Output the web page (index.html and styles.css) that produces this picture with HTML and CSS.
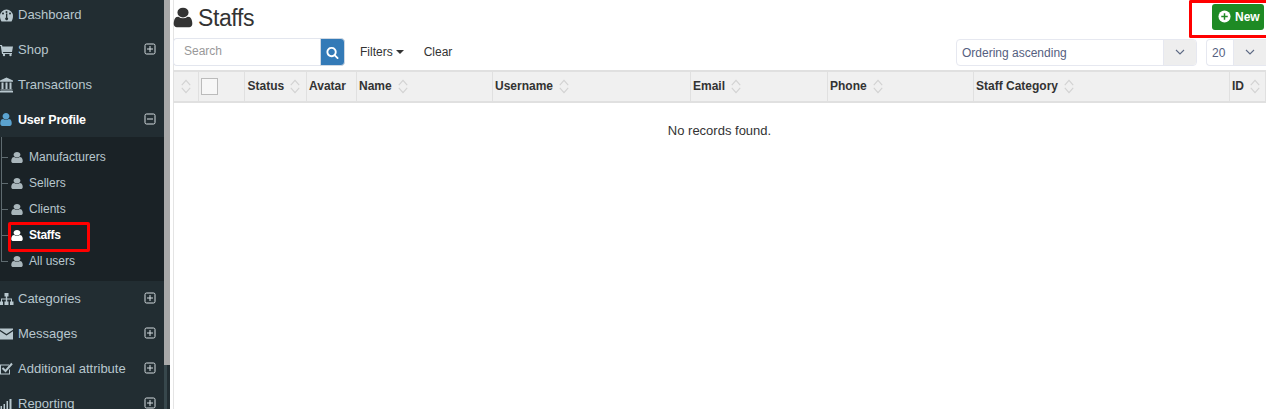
FILE: index.html
```html
<!DOCTYPE html>
<html lang="en">
<head>
<meta charset="UTF-8" />
<meta name="viewport" content="width=device-width, initial-scale=1" />
<title>Staffs</title>
<link rel="stylesheet" href="styles.css">
</head>
<body>
<svg class="defs" width="0" height="0">
  <symbol id="i-user" viewBox="0 0 1792 1792" preserveAspectRatio="none"><path d="M1536 1399q0 109-62.5 187t-150.5 78h-854q-88 0-150.5-78t-62.5-187q0-85 8.5-160.5t31.5-152 58.5-131 94-89 134.5-34.5q131 128 313 128t313-128q76 0 134.5 34.5t94 89 58.5 131 31.5 152 8.5 160.5zm-256-887q0 159-112.5 271.5t-271.5 112.5-271.5-112.5-112.5-271.5 112.5-271.5 271.5-112.5 271.5 112.5 112.5 271.5z"/></symbol>
  <symbol id="i-search" viewBox="0 0 1792 1792"><path d="M1216 832q0-185-131.5-316.5t-316.5-131.5-316.5 131.5-131.5 316.5 131.5 316.5 316.5 131.5 316.5-131.5 131.5-316.5zm512 832q0 52-38 90t-90 38q-54 0-90-38l-343-342q-179 124-399 124-143 0-273.5-55.5t-225-150-150-225-55.5-273.5 55.5-273.5 150-225 225-150 273.5-55.5 273.5 55.5 225 150 150 225 55.5 273.5q0 220-124 399l343 343q37 37 37 90z"/></symbol>
  <symbol id="i-plus" viewBox="0 0 12 12"><rect x="1" y="1" width="10" height="10" rx="1.500" fill="none" stroke="currentColor"/><path d="M3 6h6M6 3v6" stroke="currentColor"/></symbol>
  <symbol id="i-minus" viewBox="0 0 12 12"><rect x="1" y="1" width="10" height="10" rx="1.500" fill="none" stroke="currentColor"/><path d="M3 6h6" stroke="currentColor"/></symbol>
  <symbol id="i-sort" viewBox="0 0 12 16"><path d="M1.500 6.500L6 1.500l4.500 5M1.500 9.500L6 14.500l4.500-5" fill="none" stroke="#d2d2d2" stroke-width="1.200"/></symbol>
  <symbol id="i-chev" viewBox="0 0 10 6"><path d="M1 1l4 4 4-4" fill="none" stroke="#5f6b85" stroke-width="1.100"/></symbol>
</svg>

<div class="app">
  <aside class="sidebar">
    <a class="nav-row">
      <svg class="nav-icon" viewBox="0 0 16 16"><path fill-rule="evenodd" d="M8.500 2.500A6.500 6.500 0 0 0 2 9c0 2 .6 3.900 1.500 5.500h10c.9-1.600 1.500-3.500 1.500-5.500a6.500 6.500 0 0 0-6.500-6.500zM8.500 4a1 1 0 1 1 0 2 1 1 0 0 1 0-2zM5 5.500a1 1 0 1 1 0 2 1 1 0 0 1 0-2zM12 5.500a1 1 0 1 1 0 2 1 1 0 0 1 0-2zM8 6.500h1.400l-.1 4a1.400 1.400 0 1 1-1.300 0z"/></svg>
      <span>Dashboard</span>
    </a>
    <a class="nav-row">
      <svg class="nav-icon" viewBox="0 0 16 16"><path d="M2 3h2l.4 1.500H15l-1 5.500H5l.2 1H14v1H4L2.800 4H2z"/><circle cx="6" cy="13" r="1.200"/><circle cx="12.500" cy="13" r="1.200"/></svg>
      <span>Shop</span>
      <svg class="toggle"><use href="#i-plus"/></svg>
    </a>
    <a class="nav-row">
      <svg class="nav-icon" viewBox="0 0 16 16"><path d="M8.500 .5L15 3.500v1.200H2V3.500zM3.500 5.500h2v6.500h-2zM7.500 5.500h2v6.500h-2zM11.500 5.500h2v6.500h-2zM2.500 12.500h12v1h-12zM2 14h13v1.500H2z"/></svg>
      <span>Transactions</span>
    </a>
    <a class="nav-row is-open">
      <svg class="nav-icon user-blue"><use href="#i-user"/></svg>
      <span>User Profile</span>
      <svg class="toggle"><use href="#i-minus"/></svg>
    </a>
    <ul class="subnav">
      <li><svg class="sub-icon"><use href="#i-user"/></svg>Manufacturers</li>
      <li><svg class="sub-icon"><use href="#i-user"/></svg>Sellers</li>
      <li><svg class="sub-icon"><use href="#i-user"/></svg>Clients</li>
      <li class="active"><svg class="sub-icon"><use href="#i-user"/></svg>Staffs</li>
      <li><svg class="sub-icon"><use href="#i-user"/></svg>All users</li>
    </ul>
    <a class="nav-row">
      <svg class="nav-icon" viewBox="0 0 16 16"><path d="M6.500 2h4v3.500H9.200v2H14v3h1.500V14H12v-3.500h1v-2H9.200v2h1.300V14h-4v-3.500h1.300v-2H4v2h1V14H2v-3.500h1v-3h4.800v-2H6.500z"/></svg>
      <span>Categories</span>
      <svg class="toggle"><use href="#i-plus"/></svg>
    </a>
    <a class="nav-row">
      <svg class="nav-icon" viewBox="0 0 16 16"><path d="M2 2.500h13v1.300L8.500 8 2 3.800zM2 5.300l6.500 4.200L15 5.300v8.200H2z"/></svg>
      <span>Messages</span>
      <svg class="toggle"><use href="#i-plus"/></svg>
    </a>
    <a class="nav-row">
      <svg class="nav-icon" viewBox="0 0 16 16"><path d="M2 3.500h9v1H3v8h8V9l1-1v5.500H2z"/><path d="M4.500 7l3 3L14 2.500" fill="none" stroke="currentColor" stroke-width="2"/></svg>
      <span>Additional attribute</span>
      <svg class="toggle"><use href="#i-plus"/></svg>
    </a>
    <a class="nav-row">
      <svg class="nav-icon" viewBox="0 0 16 16"><path d="M2.500 10h1.500v4H2.500zM5.500 8h1.500v6H5.500zM8.500 5h1.500v9H8.500zM11.500 3h2v11h-2z"/></svg>
      <span>Reporting</span>
      <svg class="toggle"><use href="#i-plus"/></svg>
    </a>
  </aside>
  <div class="scrollbar"><div class="thumb"></div></div>

  <main class="content">
    <header class="page-head">
      <h1><svg class="title-icon"><use href="#i-user"/></svg>Staffs</h1>
      <button class="btn-new" type="button">
        <svg class="new-icon" viewBox="0 0 14 14"><circle cx="7" cy="7" r="6.500" fill="#fff"/><path d="M7 3.500v7M3.500 7h7" stroke="#1e8a24" stroke-width="1.600"/></svg>New
      </button>
    </header>

    <div class="toolbar">
      <div class="search">
        <input type="text" placeholder="Search" />
        <button type="button"><svg><use href="#i-search"/></svg></button>
      </div>
      <span class="link filters">Filters<i class="caret"></i></span>
      <span class="link clear">Clear</span>
      <div class="select select-order">
        <span>Ordering ascending</span>
        <b><svg><use href="#i-chev"/></svg></b>
      </div>
      <div class="select select-size">
        <span>20</span>
        <b><svg><use href="#i-chev"/></svg></b>
      </div>
    </div>

    <table class="grid">
      <colgroup>
        <col class="c-sort"><col class="c-check"><col class="c-status"><col class="c-avatar"><col class="c-name">
        <col class="c-username"><col class="c-email"><col class="c-phone"><col class="c-category"><col>
      </colgroup>
      <thead>
        <tr>
          <th><svg class="sort"><use href="#i-sort"/></svg></th>
          <th><span class="checkbox"></span></th>
          <th>Status<svg class="sort"><use href="#i-sort"/></svg></th>
          <th>Avatar</th>
          <th>Name<svg class="sort"><use href="#i-sort"/></svg></th>
          <th>Username<svg class="sort"><use href="#i-sort"/></svg></th>
          <th>Email<svg class="sort"><use href="#i-sort"/></svg></th>
          <th>Phone<svg class="sort"><use href="#i-sort"/></svg></th>
          <th>Staff Category<svg class="sort"><use href="#i-sort"/></svg></th>
          <th>ID<svg class="sort"><use href="#i-sort"/></svg></th>
        </tr>
      </thead>
      <tbody>
        <tr><td colspan="10">No records found.</td></tr>
      </tbody>
    </table>
  </main>
</div>

<div class="mark mark-staffs"></div>
<div class="mark mark-new"></div>
</body>
</html>
```

FILE: styles.css
```css
html, body { margin: 0; height: 100%; overflow: hidden; background: #fff; }
body { font-family: "Liberation Sans", Arial, sans-serif; font-size: 13px; color: #333; }
.defs { position: absolute; }

.app { display: flex; height: 409px; }

/* sidebar */
.sidebar { width: 164px; flex: none; background: #222d32; overflow: hidden; }
.nav-row { display: flex; align-items: center; height: 35px; color: #b8c7ce; font-size: 13px; }
.sidebar .nav-row:first-child { margin-top: -3px; }
.nav-row span { flex: 1; }
.nav-row.is-open { color: #fff; font-weight: bold; font-size: 12.5px; letter-spacing: -.2px; }
.nav-icon { width: 16px; height: 16px; margin: 0 4px 0 -2px; fill: #b8c7ce; flex: none; }
.nav-icon.user-blue { height: 15px; fill: #5ba3d0; }
.toggle { width: 12px; height: 12px; margin: -1px 8px 0 0; color: #d5dde0; flex: none; }

.subnav { list-style: none; margin: 0; padding: 7px 0; background: #1a2226; position: relative; }
.subnav::before { content: ""; position: absolute; left: 1px; top: 0; height: 125px; border-left: 1px solid #5f6b70; }
.subnav li { display: flex; align-items: center; height: 26px; padding-left: 9px; color: #b8c7ce; font-size: 12px; position: relative; }
.subnav li::before { content: ""; position: absolute; left: 1px; top: 13px; width: 7px; border-top: 1px solid #5f6b70; }
.subnav li.active { color: #fff; font-weight: bold; letter-spacing: -.3px; }
.sub-icon { width: 16px; height: 13px; margin-right: 4px; fill: #a9b6bb; }
.active .sub-icon { fill: #fff; }

.scrollbar { width: 6px; flex: none; background: linear-gradient(90deg, #37474c 50%, #222d32 50%); }
.thumb { height: 365px; background: #a8a8a8; }

/* content */
.content { flex: 1; min-width: 0; margin-left: 3px; border-left: 1px solid #e4e4e4; }
.content > * { margin-left: -1px; }
.page-head { display: flex; justify-content: space-between; height: 38px; }
h1 { margin: 0; display: flex; align-items: center; height: 36px; font-size: 23px; font-weight: normal; color: #333; letter-spacing: -.4px; }
.title-icon { width: 26px; height: 23px; margin: -2px 2px 0 -3px; fill: #333; }
.btn-new { display: flex; align-items: center; width: 52px; height: 26px; margin: 4px 2px 0 0; padding: 0 0 0 6px; border: 0; border-radius: 3px; background: #1e8a24; color: #fff; font: bold 12px "Liberation Sans", Arial, sans-serif; }
.new-icon { width: 13px; height: 13px; margin: -1px 4px 0 0; }

.toolbar { display: flex; align-items: center; height: 28px; }
.search { display: flex; width: 172px; height: 28px; }
.search input { width: 147px; box-sizing: border-box; height: 28px; padding: 0 10px 2px; border: 1px solid #e3e6ee; border-right: 0; border-radius: 4px 0 0 4px; font: 12px "Liberation Sans", Arial, sans-serif; outline: 0; }
.search input::placeholder { color: #999; }
.search button { width: 25px; height: 28px; padding: 0; border: 1px solid #cfd8e3; border-radius: 0 4px 4px 0; background: #337ab7; display: flex; align-items: center; justify-content: center; }
.search svg { width: 13px; height: 13px; fill: #fff; }
.link { font-size: 12px; color: #333; }
.filters { margin-left: 15px; }
.caret { display: inline-block; margin-left: 3px; vertical-align: 2px; border-top: 4px solid #333; border-left: 4px solid transparent; border-right: 4px solid transparent; }
.clear { margin-left: 20px; }
.select { display: flex; box-sizing: border-box; height: 27px; border: 1px solid #e6e8f0; border-radius: 4px; font-size: 12px; color: #556080; align-items: center; overflow: hidden; }
.select span { flex: 1; padding: 1px 0 0 5px; }
.select b { display: flex; align-items: center; justify-content: center; width: 32px; height: 100%; background: #eee; border-left: 1px solid #e6e8f0; }
.select svg { width: 10px; height: 6px; }
.select-order { width: 241px; margin-left: auto; }
.select-size { width: 60px; margin-left: 9px; border-right: 0; border-radius: 4px 0 0 4px; }

/* table */
.content > .grid { width: 1093px; margin-top: 4px; border-collapse: collapse; table-layout: fixed; }
.c-sort { width: 25px; }
.c-check { width: 46px; }
.c-status { width: 62px; }
.c-avatar { width: 50px; }
.c-name { width: 136px; }
.c-username { width: 198px; }
.c-email { width: 137px; }
.c-phone { width: 146px; }
.c-category { width: 256px; }
.grid th { height: 27px; padding: 0 0 2px 2px; background: #f0f0f0; border: 1px solid #e0e0e0; border-width: 2px 1px; font-size: 12px; font-weight: bold; color: #333; text-align: left; white-space: nowrap; }
.grid th:nth-child(3) { padding-left: 2.5px; }
.grid td { padding: 20px 0 0; text-align: center; font-size: 13px; color: #333; }
.sort { width: 12px; height: 15px; margin: 0 0 -1px 5px; vertical-align: -3px; }
th:first-child .sort { margin-left: 4px; }
.checkbox { display: block; width: 15px; height: 15px; margin-top: 2px; border: 1px solid #bbb; background: #f7f7f7; }

/* red annotation boxes from the screenshot */
.mark { position: absolute; border: 3px solid #f00; box-sizing: border-box; }
.mark-staffs { left: 8px; top: 222px; width: 82px; height: 30px; border-radius: 2px; }
.mark-new { left: 1189px; top: 0; width: 77px; height: 38px; border-right: 0; border-radius: 2px 0 0 2px; }
```
